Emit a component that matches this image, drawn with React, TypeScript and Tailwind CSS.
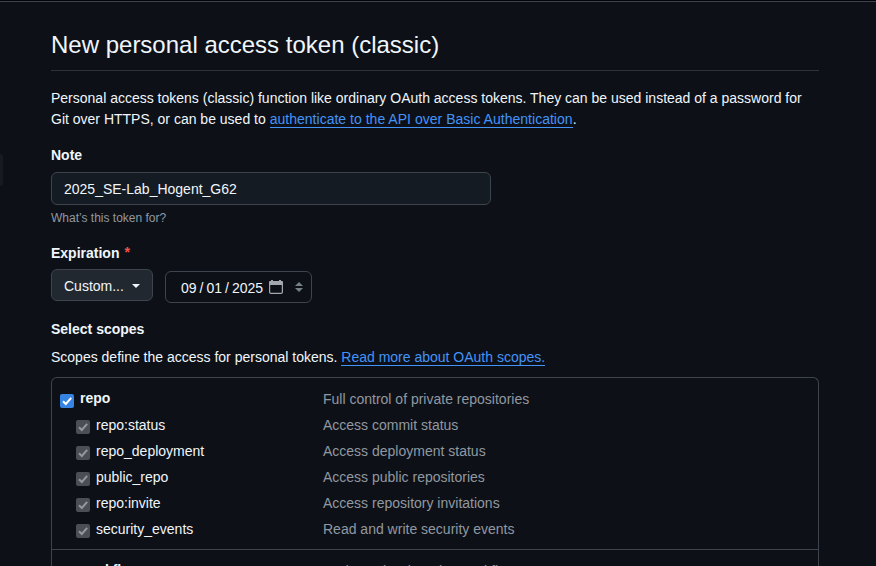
import React from "react";

const scopes = [
  { name: "repo:status", description: "Access commit status" },
  { name: "repo_deployment", description: "Access deployment status" },
  { name: "public_repo", description: "Access public repositories" },
  { name: "repo:invite", description: "Access repository invitations" },
  { name: "security_events", description: "Read and write security events" },
];

function Check({ disabled = false }: { disabled?: boolean }) {
  return (
    <svg className="mt-[5px] h-[14px] w-[14px] shrink-0" viewBox="0 0 14 14">
      <rect width="14" height="14" rx="2" fill={disabled ? "#4b4e55" : "#3584e4"} />
      <path
        d="M3 7.2 L5.8 10 L11.2 3.9"
        fill="none"
        stroke={disabled ? "#95979b" : "#ffffff"}
        strokeWidth="2"
      />
    </svg>
  );
}

function Link({ children }: { children: React.ReactNode }) {
  return (
    <a className="inline-block h-[19px] border-b border-[#4493f8] leading-[20px] text-[#4493f8]">{children}</a>
  );
}

export default function App() {
  return (
    <div className="flex h-[566px] w-[876px] flex-col overflow-hidden bg-[#0d1117] font-['Liberation_Sans',Arial,sans-serif] text-[14px] leading-[21px] text-[#f0f6fc]">
      <div className="h-[2px] shrink-0 border-b border-[#3d444d] bg-[#010409]" />
      <div className="flex min-h-0 flex-1">
        <div className="mt-[152px] h-[32px] w-[3px] shrink-0 rounded-r-md bg-[#171b21]" />
        <main className="ml-12 w-[768px] shrink-0">
          <h1 className="mt-[25px] h-[44px] border-b border-[#2e333b] text-[24px] leading-[36px]">
            New personal access token (classic)
          </h1>
          <p className="mt-[17px] h-[42px] whitespace-nowrap">
            Personal access tokens (classic) function like ordinary OAuth access tokens. They can be used instead of a password for
            <br />
            Git over HTTPS, or can be used to{" "}
            <span className="tracking-[0.02px]">
              <Link>authenticate to the API over Basic Authentication</Link>
            </span>
            .
          </p>
          <div className="mt-[15px] font-bold">Note</div>
          <div className="mt-[6px] flex h-[33px] w-[440px] items-center rounded-md border border-[#3d444d] bg-[#151b23] px-3 pt-[2px]">
            2025_SE-Lab_Hogent_G62
          </div>
          <div className="mt-[4px] text-[12px] leading-[18px] text-[#9198a1]">What’s this token for?</div>
          <div className="mt-[16px] flex font-bold">
            Expiration <span className="-mt-px ml-[5px] text-[#f85149]">*</span>
          </div>
          <div className="mt-[5px] flex gap-3">
            <div className="flex h-[32px] w-[102px] items-center rounded-md border border-[#3d444d] bg-[#212830] pl-3">
              <span className="w-[68px] pt-[2px]">Custom...</span>
              <svg className="mt-px" width="8" height="4" viewBox="0 0 8 4" fill="#f0f6fc">
                <path d="M0 0H8L4 4Z" />
              </svg>
            </div>
            <div className="mt-[2px] flex h-[32px] w-[147px] items-center rounded-md border border-[#3d444d] pl-[15px]">
              <span className="w-[88px] whitespace-pre pt-[2px]">09<span className="mx-[3px]">/</span>01<span className="mx-[3px]">/</span>2025</span>
              <svg width="14" height="14" viewBox="0 0 14 14" fill="none">
                <path d="M2 0H4V1H10V0H12V1H13Q14 1 14 2V12Q14 14 12 14H2Q0 14 0 12V2Q0 1 1 1H2ZM1.2 5V12Q1.2 12.8 2 12.8H12Q12.8 12.8 12.8 12V5Z" fill="#a5a7ac" fillRule="evenodd" />
              </svg>
              <svg className="ml-[12px]" width="8" height="12" viewBox="0 0 8 12" fill="#768088">
                <path d="M4 1L8 5H0ZM0 7H8L4 11Z" />
              </svg>
            </div>
          </div>
          <div className="mt-[16px] font-bold">Select scopes</div>
          <p className="mt-[7px] h-[21px] whitespace-nowrap">
            Scopes define the access for personal tokens. <Link>Read more about OAuth scopes.</Link>
          </p>
          <div className="mt-[9px] h-[240px] rounded-t-md border border-b-0 border-[#3d444d]">
            <div className="h-[172px] border-b border-[#3d444d] pt-[11px] pl-2">
              <div className="flex h-[26px]">
                <div className="flex w-[263px] gap-[6px]">
                  <Check />
                  <b className="-mt-[1px]">repo</b>
                </div>
                <span className="text-[#9198a1]">Full control of private repositories</span>
              </div>
              {scopes.map((scope) => (
                <div key={scope.name} className="flex h-[26px]">
                  <div className="flex w-[263px] gap-[6px] pl-4">
                    <Check disabled />
                    <span>{scope.name}</span>
                  </div>
                  <span className="text-[#9198a1]">{scope.description}</span>
                </div>
              ))}
            </div>
            <div className="flex pt-[11px] pl-2">
              <div className="flex w-[263px] gap-[6px]">
                <Check />
                <b className="-mt-[1px]">workflow</b>
              </div>
              <span className="text-[#9198a1]">Update GitHub Action workflows</span>
            </div>
          </div>
        </main>
      </div>
    </div>
  );
}
